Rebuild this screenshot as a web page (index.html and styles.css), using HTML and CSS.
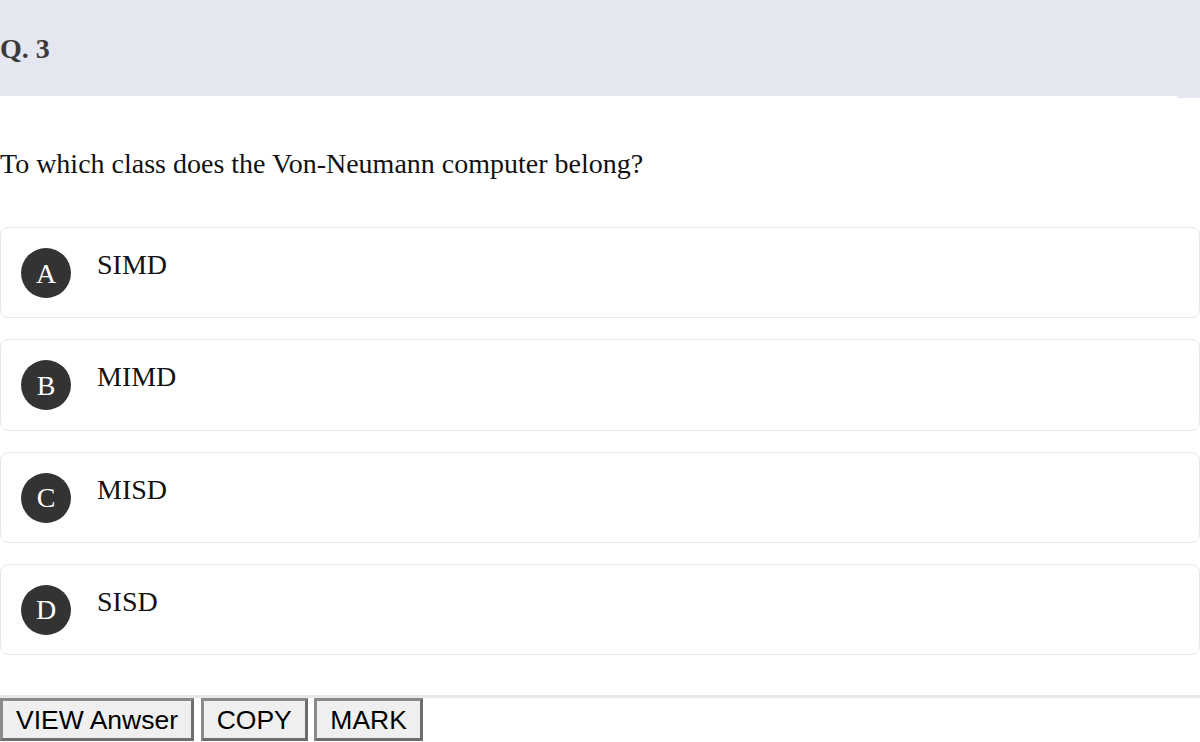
FILE: index.html
```html
<!DOCTYPE html>
<html>
<head>
<meta charset="utf-8">
<link rel="stylesheet" href="styles.css">
</head>
<body>
<div class="header"><span class="qno">Q. 3</span></div>
<p class="question">To which class does the Von-Neumann computer belong?</p>
<div class="options">
  <div class="option"><span class="badge">A</span><span class="opt-text">SIMD</span></div>
  <div class="option"><span class="badge">B</span><span class="opt-text">MIMD</span></div>
  <div class="option"><span class="badge">C</span><span class="opt-text">MISD</span></div>
  <div class="option"><span class="badge">D</span><span class="opt-text">SISD</span></div>
</div>
<div class="actions">
  <button class="btn">VIEW Anwser</button>
  <button class="btn">COPY</button>
  <button class="btn">MARK</button>
</div>
</body>
</html>
```
FILE: styles.css
```css
html, body {
  margin: 0;
  padding: 0;
  background: #ffffff;
}
body {
  font-family: "Liberation Serif", "Times New Roman", serif;
  font-size: 28px;
  color: #111111;
  overflow: hidden;
}
.header {
  background: #e4e7f0;
  height: 96px;
  box-sizing: border-box;
  padding-top: 33px;
  line-height: 32px;
  margin-right: 23px;
  position: relative;
}
.header::after {
  content: "";
  position: absolute;
  top: 0;
  right: -23px;
  width: 23px;
  height: 98px;
  background: #e4e7f0;
}
.qno {
  font-weight: bold;
  color: #3a3a3a;
}
.question {
  margin: 52px 0 0 0;
  line-height: 32px;
}
.options {
  margin-top: 47px;
  display: flex;
  flex-direction: column;
  gap: 21px;
}
.option {
  display: flex;
  align-items: flex-start;
  border: 1px solid #e6e6e6;
  border-radius: 8px;
  padding: 20px;
  height: 91.3px;
  box-sizing: border-box;
}
.badge {
  width: 50px;
  height: 50px;
  border-radius: 50%;
  background: #333333;
  color: #ffffff;
  display: flex;
  align-items: center;
  justify-content: center;
  flex: none;
  line-height: 32px;
  padding-top: 1px;
  box-sizing: border-box;
}
.opt-text {
  margin-left: 26px;
  margin-top: 1px;
  line-height: 32px;
  color: #111111;
}
.actions {
  margin-top: 40px;
  border-top: 3px solid #e8e8e8;
  font-size: 26.5px;
  line-height: 0;
}
.btn {
  font-family: "Liberation Sans", Arial, sans-serif;
  font-size: 26.5px;
  line-height: 30px;
  color: #000000;
  background: #efefef;
  border: 3px solid;
  border-color: #8a8a8a #6e6e6e #6e6e6e #8a8a8a;
  padding: 4px 13px 3px 13px;
  margin: 0;
  vertical-align: top;
}
```
